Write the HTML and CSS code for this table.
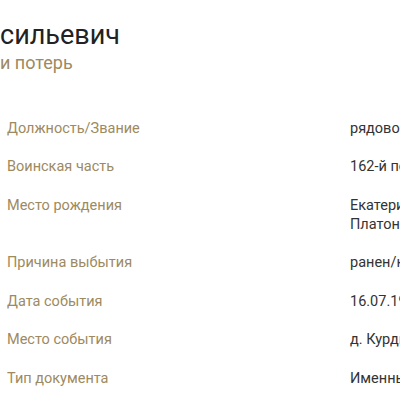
FILE: index.html
```html
<!DOCTYPE html>
<html lang="ru">
<head>
<meta charset="utf-8">
<link rel="stylesheet" href="styles.css">
</head>
<body>
<div class="page">
  <header class="head">
    <h1 class="title"><span class="cut">Иван Ва</span>сильевич</h1>
    <div class="subtitle"><span class="cut">Документ об уточнени</span>и потерь</div>
  </header>
  <dl class="info">
    <div class="row"><dt>Должность/Звание</dt><dd>рядовой</dd></div>
    <div class="row"><dt>Воинская часть</dt><dd>162-й пехотный полк</dd></div>
    <div class="row"><dt>Место рождения</dt><dd>Екатеринославская губерния,<br>Платоновский уезд</dd></div>
    <div class="row"><dt>Причина выбытия</dt><dd>ранен/контужен</dd></div>
    <div class="row"><dt>Дата события</dt><dd>16.07.1915</dd></div>
    <div class="row"><dt>Место события</dt><dd>д. Курдыш</dd></div>
    <div class="row"><dt>Тип документа</dt><dd>Именные списки</dd></div>
  </dl>
</div>
</body>
</html>
```
FILE: styles.css
```css
html, body {
  margin: 0;
  padding: 0;
  background: #fff;
  overflow: hidden;
}
.page {
  font-family: Roboto, "Noto Sans", sans-serif;
  width: 400px;
  height: 400px;
  overflow: hidden;
}
.head {
  padding-top: 18px;
}
.cut {
  display: inline-flex;
  justify-content: flex-end;
  white-space: nowrap;
  width: 300px;
  margin-left: -300px;
}
.title {
  margin: 0;
  font-size: 27px;
  font-weight: 400;
  line-height: 34px;
  color: #222;
  white-space: nowrap;
}
.subtitle {
  margin-top: 0;
  font-size: 18px;
  line-height: 22px;
  color: #9d8a5f;
  white-space: nowrap;
}
.info {
  margin: 35px 0 0 0;
  padding-left: 7px;
}
.row {
  display: grid;
  grid-template-columns: 343px 1fr;
  padding: 9.75px 0;
  font-size: 14.5px;
  line-height: 19px;
}
.row dt {
  color: #9d8a5f;
}
.row dd {
  margin: 0;
  color: #333;
  white-space: nowrap;
}
```
